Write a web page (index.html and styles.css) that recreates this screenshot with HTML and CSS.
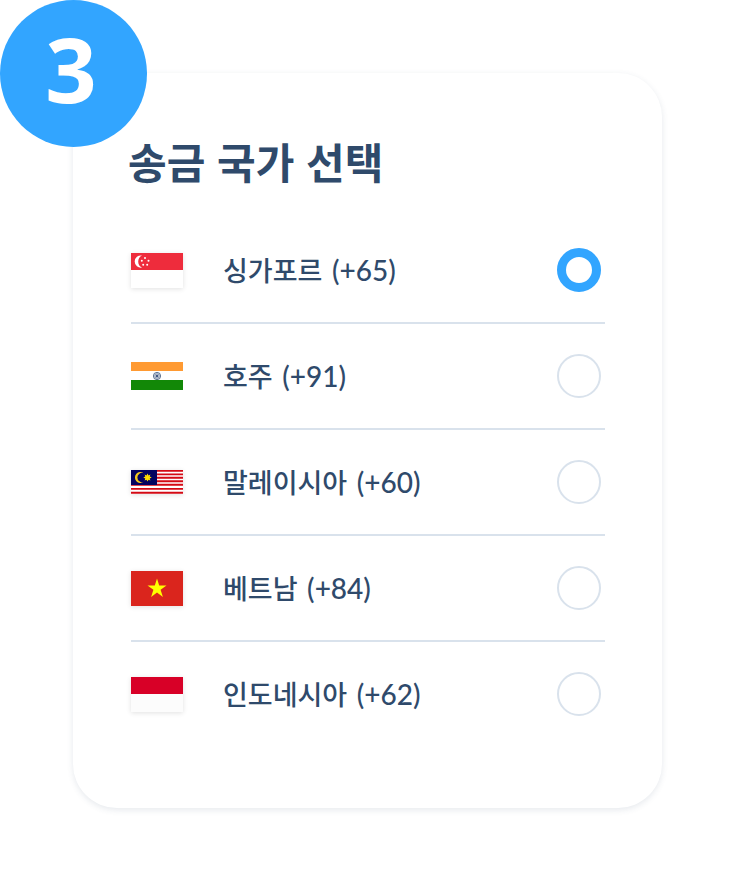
FILE: index.html
```html
<!DOCTYPE html>
<html lang="ko">

<head>
  <meta charset="utf-8">
  <meta name="viewport" content="width=device-width, initial-scale=1">
  <link rel="stylesheet" href="styles.css">
  <title>송금 국가 선택</title>
</head>

<body>
  <main class="card">
    <div class="step">3</div>
    <h1 class="title" id="title">송금 국가 선택</h1>
    <div class="countries" role="radiogroup" aria-labelledby="title">
      <label class="country">
        <svg class="flag shadow" viewBox="0 0 52 35" aria-hidden="true">
          <rect width="52" height="35" fill="#fff"/>
          <rect width="52" height="17" fill="#ee2c3c"/>
          <path d="M11 2.5a6.2 6.2 0 1 0 0 12.2a6.8 6.8 0 0 1 0-12.2z" fill="#fff"/>
          <g fill="#fff">
            <circle cx="14" cy="5" r="1"/>
            <circle cx="10.8" cy="7.8" r="1"/>
            <circle cx="17.5" cy="7.8" r="1"/>
            <circle cx="12.2" cy="11.8" r="1"/>
            <circle cx="16.2" cy="11.8" r="1"/>
          </g>
        </svg>
        <span class="name">싱가포르 <span class="code">(+65)</span></span>
        <input class="radio" type="radio" name="country" value="65" checked>
      </label>
      <label class="country">
        <svg class="flag" viewBox="0 0 52 28" aria-hidden="true">
          <rect width="52" height="28" fill="#fff"/>
          <rect width="52" height="9" fill="#ff9a32"/>
          <rect y="18" width="52" height="10" fill="#128807"/>
          <circle cx="26" cy="14" r="3.6" fill="#d5dbe6" stroke="#5c7290"/>
          <path d="M26 10.5v7M22.5 14h7M23.5 11.5l5 5M28.5 11.5l-5 5" stroke="#6b7f9c" stroke-width=".6"/>
          <circle cx="26" cy="14" r="1.2" fill="#3f5680"/>
        </svg>
        <span class="name">호주 <span class="code">(+91)</span></span>
        <input class="radio" type="radio" name="country" value="91">
      </label>
      <label class="country">
        <svg class="flag shadow" viewBox="0 0 52 24" aria-hidden="true">
          <rect width="52" height="24" fill="#fff"/>
          <path d="M0 .9h52M0 4.4h52M0 7.8h52M0 11.2h52M0 14.7h52M0 18.9h52M0 22.8h52" stroke="#d40a14" stroke-width="1.9"/>
          <rect width="26" height="15" fill="#03035f"/>
          <path d="M12.6 3.2a5.4 5.4 0 1 0 0 8.6a4.6 4.6 0 1 1 0-8.6z" fill="#f5c91c"/>
          <path d="M16.5 3.6l1 1.8 1.9-.8-.7 1.9 2 1-2 1 .7 2-1.9-.8-1 1.9-1-1.9-1.9.8.7-2-2-1 2-1-.7-1.9 1.9.8z" fill="#fd0"/>
        </svg>
        <span class="name">말레이시아 <span class="code">(+60)</span></span>
        <input class="radio" type="radio" name="country" value="60">
      </label>
      <label class="country">
        <svg class="flag shadow" viewBox="0 0 52 35" aria-hidden="true">
          <rect width="52" height="35" fill="#da251d"/>
          <path d="M26 7.5l2.2 7h7.3l-5.9 4.3 2.3 7.2-5.9-4.5-5.9 4.5 2.3-7.2-5.9-4.3h7.3z" fill="#ff0"/>
        </svg>
        <span class="name">베트남 <span class="code">(+84)</span></span>
        <input class="radio" type="radio" name="country" value="84">
      </label>
      <label class="country">
        <svg class="flag shadow" viewBox="0 0 52 35" aria-hidden="true">
          <rect width="52" height="35" fill="#fcfcfc"/>
          <rect width="52" height="17" fill="#d80027"/>
        </svg>
        <span class="name">인도네시아 <span class="code">(+62)</span></span>
        <input class="radio" type="radio" name="country" value="62">
      </label>
    </div>
  </main>
</body>

</html>
```
FILE: styles.css
```css
* {
  box-sizing: border-box;
}

body {
  margin: 0;
  padding: 73px 74px 73px 73px;
  background: #fff;
  color: #2f4a6b;
  font-family: "Noto Sans CJK KR", sans-serif;
}

.card {
  position: relative;
  padding: 58px 57px 62px 58px;
  border-radius: 44px;
  background: #fff;
  box-shadow: 0 2px 6px rgba(47, 74, 107, 0.12);
}

/* step number sits over the card corner */
.step {
  position: absolute;
  top: -73px;
  left: -73px;
  display: flex;
  align-items: center;
  justify-content: center;
  width: 147px;
  height: 147px;
  padding: 0 5px 12px 0;
  border-radius: 50%;
  background: #32a5ff;
  color: #fff;
  font-family: "Noto Sans", sans-serif;
  font-size: 90px;
  font-weight: 700;
  line-height: 1;
}

.title {
  margin: 0 0 27px -3px;
  font-size: 42px;
  font-weight: 700;
  line-height: 60px;
}

.country {
  display: flex;
  align-items: center;
  gap: 40px;
  height: 106px;
  border-bottom: 2px solid #d9e2ec;
  cursor: pointer;
}

.country:last-child {
  height: 104px;
  border-bottom: 0;
}

.flag {
  flex: none;
  width: 52px;
}

.shadow {
  box-shadow: 0 1px 5px rgba(0, 0, 0, 0.12);
}

.name {
  flex: 1;
  font-size: 27px;
  font-weight: 500;
  line-height: 40px;
}

.code {
  margin-left: 2px;
  font-family: Lato, sans-serif;
  font-size: 28px;
}

.radio {
  flex: none;
  width: 44px;
  height: 44px;
  margin: 0 4px 0 0;
  border: 2px solid #d9e2ec;
  border-radius: 50%;
  background: #fff;
  appearance: none;
  cursor: pointer;
}

.radio:checked {
  border: 9px solid #32a5ff;
}
```
